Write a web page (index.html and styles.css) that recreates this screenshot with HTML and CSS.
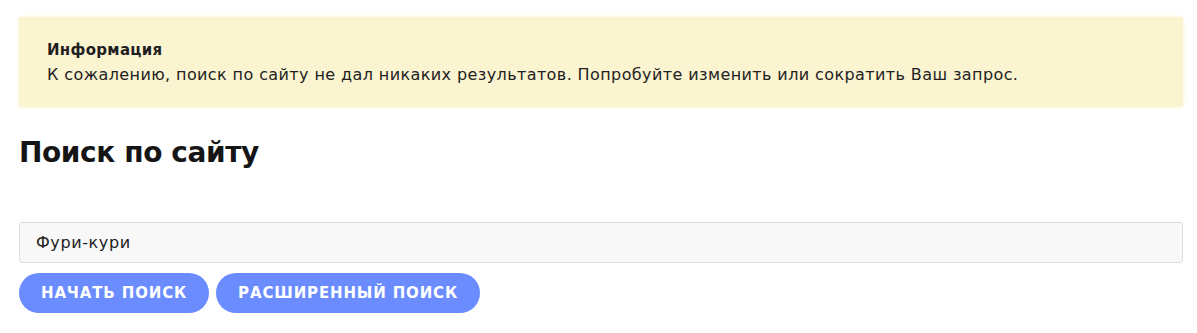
FILE: index.html
```
<!DOCTYPE html>
<html lang="ru">
<head>
    <meta charset="UTF-8">
    <title>Поиск по сайту</title>
    <link rel="stylesheet" href="styles.css">
</head>
<body>
    <div class="page">
        <div class="notice">
            <div class="notice-title">Информация</div>
            <div class="notice-text">К сожалению, поиск по сайту не дал никаких результатов. Попробуйте изменить или сократить Ваш запрос.</div>
        </div>

        <h1>Поиск по сайту</h1>

        <form class="search-form">
            <input type="text" class="search-input" value="Фури-кури">
            <div class="buttons">
                <button type="button" class="btn">Начать поиск</button>
                <button type="button" class="btn">Расширенный поиск</button>
            </div>
        </form>
    </div>
</body>
</html>
```
FILE: styles.css
```
* {
    margin: 0;
    padding: 0;
    box-sizing: border-box;
    font-family: 'DejaVu Sans', sans-serif;
}
body {
    background: #fff;
    color: #1f1f1f;
}
.page {
    padding: 17px 14px 0 19px;
}
.notice {
    background: #fbf4d0;
    padding: 22px 28px 18px;
    box-shadow: 0 0 4px rgba(251, 244, 208, 0.9);
}
.notice-title {
    font-weight: 700;
    font-size: 15px;
    line-height: 22px;
    letter-spacing: 0.3px;
}
.notice-text {
    font-size: 16px;
    line-height: 28px;
    letter-spacing: 0.4px;
    color: #222;
}
h1 {
    font-size: 28px;
    font-weight: 700;
    margin-top: 26px;
    line-height: 40px;
    letter-spacing: -0.4px;
    color: #151515;
}
.search-form {
    margin-top: 49px;
}
.search-input {
    display: block;
    width: 100%;
    height: 41px;
    padding: 0 16px;
    border: 1px solid #dcdcdc;
    border-radius: 3px;
    background: #f8f8f8;
    font-size: 16px;
    letter-spacing: 0.6px;
    color: #222;
    outline: none;
}
.buttons {
    display: flex;
    gap: 7px;
    margin-top: 10px;
}
.btn {
    height: 40px;
    padding: 0 22px;
    border: none;
    border-radius: 20px;
    background: #6b8cff;
    color: #fff;
    font-weight: 700;
    font-size: 15px;
    letter-spacing: 0.85px;
    text-transform: uppercase;
    cursor: pointer;
}
```
